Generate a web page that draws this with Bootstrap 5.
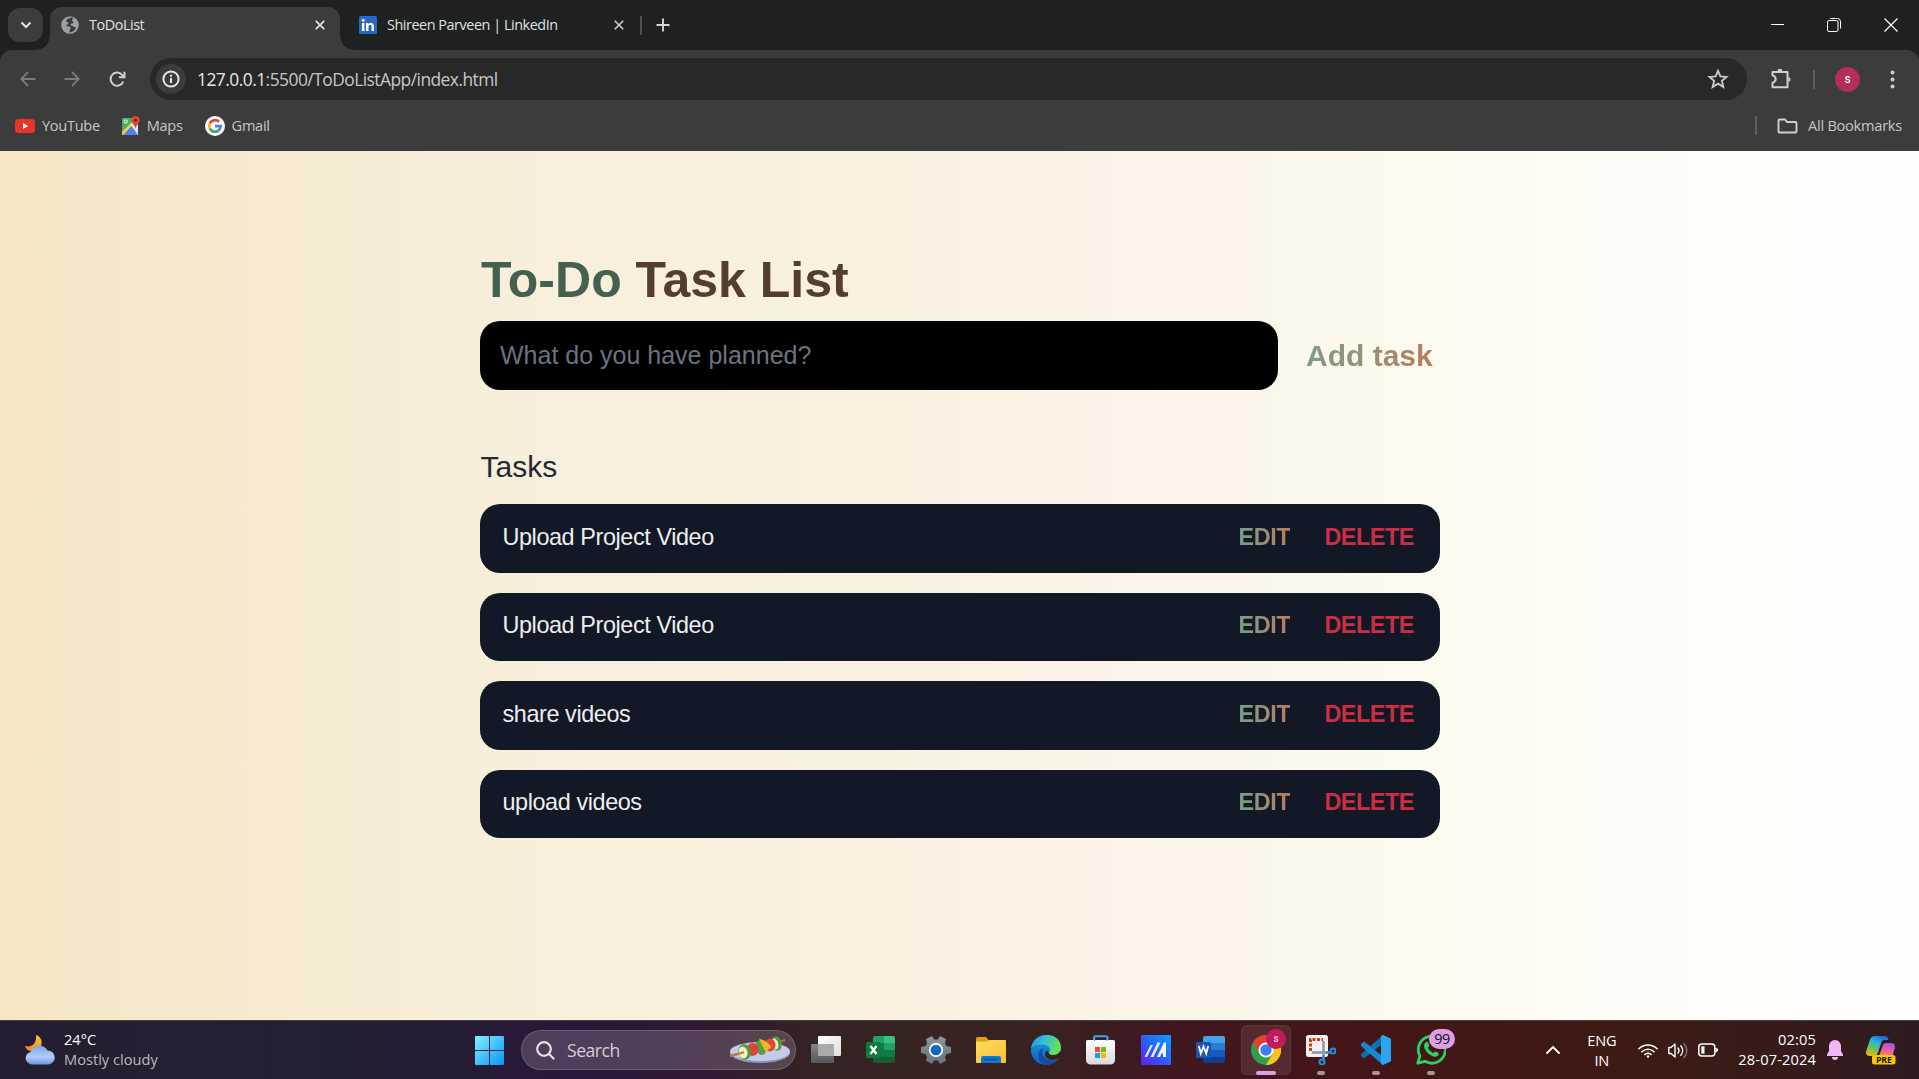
<!DOCTYPE html>
<html lang="en">
<head>
<meta charset="utf-8">
<title>ToDoList</title>
<link rel="stylesheet" href="https://cdn.jsdelivr.net/npm/bootstrap@5.3.0/dist/css/bootstrap.min.css">
<style>
  html, body { height: 100%; }
  body { font-family: "Liberation Sans", Arial, sans-serif; overflow: hidden; }
  svg { display: block; flex: none; }
  .desktop { width: 1919px; height: 1079px; }
  .ui { font-family: "Open Sans", "Noto Sans", sans-serif; }

  /* browser window */
  .tabstrip { height: 50px; background: #1f2020; }
  .tab-menu { width: 35px; height: 34px; margin: 8px 0 0 8px; border-radius: 12px; background: #3c3c3c; }
  .tab-active { width: 290px; height: 43px; margin: 7px 0 0 7px; padding: 0 11px 8px; border-radius: 12px 12px 0 0; background: #3c3c3c; }
  .tab-active::before, .tab-active::after { content: ""; position: absolute; bottom: 0; width: 14px; height: 14px; }
  .tab-active::before { left: -14px; background: radial-gradient(circle at 0 0, transparent 13.5px, #3c3c3c 14px); }
  .tab-active::after { right: -14px; background: radial-gradient(circle at 100% 0, transparent 13.5px, #3c3c3c 14px); }
  .tab-idle { height: 50px; padding-left: 19px; width: 302px; }
  .tab-text { font-size: 14.4px; letter-spacing: -.45px; color: #dfe1e3; line-height: 20px; margin-left: 10px; }
  .toolbar-back { background: #1f2020; }
  .toolbar { height: 54px; background: #3c3c3c; border-radius: 12px 12px 0 0; padding: 4px 0 0 20px; }
  .omnibox { width: 1597px; height: 42px; margin-left: 24px; border-radius: 21px; background: #282828; padding: 0 18px 0 6px; }
  .site-info { width: 30px; height: 30px; border-radius: 50%; background: #3c3c3c; }
  .url { font-size: 17.4px; letter-spacing: -.53px; color: #c7c7c7; margin-left: 11px; }
  .url b { font-weight: 400; color: #e8e8e8; }
  .avatar-dot { width: 25px; height: 25px; border-radius: 50%; background: #b32d5d; color: #fff; font: 12px "Roboto", sans-serif; }
  .bookmarks { height: 47px; background: #3c3c3c; padding: 0 0 4px 15px; }
  .bookmarks span { font-size: 14.6px; letter-spacing: -.32px; color: #c7c7c7; margin-left: 7px; }
  .bar-line { width: 2px; height: 19px; background: #5e5e5e; }

  /* to-do page */
  .todo-page { height: 869px; background: linear-gradient(to right, #f5e7c5 0%, #f6ebd0 13%, #f7eeda 25%, #faf2e2 50%, #fcf4e8 58%, #fcf9ed 72%, #fefdf9 88%, #ffffff 100%); padding-top: 98px; }
  .todo-wrap { width: 960px; margin-left: 480px; }
  .todo-title { font-size: 50px; line-height: 62px; margin: 0; height: 72px; padding-left: 1px; font-weight: 700; color: #553c30; }
  .todo-title span { color: #44614f; }
  .todo-input { width: 798px; height: 69px; border-radius: 20px; background: #000; border: 0; padding: 0 20px; font-size: 25px; color: #f3f4f6; }
  .todo-input::placeholder { color: #6b7280; opacity: 1; }
  .grad-text { border: 0; background: linear-gradient(to right, #799f8a, #bb7c5c); -webkit-background-clip: text; background-clip: text; color: transparent; font-weight: 700; padding: 0; }
  .add-btn { font-size: 30px; margin-left: 28px; }
  .tasks-head { font-size: 30px; line-height: 36px; font-weight: 400; color: #1f2937; margin: 59px 0 0; height: 55.2px; padding-left: .5px; }
  .task-row { height: 68.5px; border-radius: 20px; background: #121826; padding: 0 26px 2px 22.5px; margin-bottom: 20px; }
  .task-row .task-name { font-size: 23.4px; letter-spacing: -.4px; color: #eeeeee; }
  .edit-btn { font-size: 23.4px; letter-spacing: -.35px; }
  .delete-btn { font-size: 23.4px; letter-spacing: -.45px; font-weight: 700; color: #c92f42; margin-left: 34px; border: 0; background: none; padding: 0; }

  /* taskbar */
  .taskbar { height: 59px; color: #fff; border-top: 1px solid #45403f; background: linear-gradient(to right, #251e30 0%, #242032 14%, #251c34 24%, #29183a 30%, #311a33 37%, #352323 43%, #362321 53%, #411720 61%, #451518 70%, #421814 78%, #3c1b14 86%, #351b1a 94%, #2d1b20 100%); }
  .weather { width: 475px; padding-left: 25px; font-size: 14.6px; line-height: 20px; letter-spacing: .02px; }
  .weather div div + div { color: #bcb8be; }
  .search-box { width: 275px; height: 40px; margin-left: 17px; border-radius: 20px; background: rgba(255,255,255,.17); border: 1px solid rgba(255,255,255,.16); padding: 0 4px 0 14px; font-size: 17.6px; letter-spacing: -.5px; color: #d6cdd6; }
  .app-strip { margin-left: 2px; }
  .app { width: 55px; height: 58px; }
  .app::after { content: ""; position: absolute; bottom: 4px; left: 24px; width: 0; height: 4px; border-radius: 2px; background: #ab9495; }
  .app.running::after { width: 8px; }
  .app.current::after { width: 20px; left: 18px; background: #dfa1e5; }
  .app.current::before { content: ""; position: absolute; left: 3px; top: 4px; width: 50px; height: 50px; border-radius: 6px; background: rgba(255,255,255,.09); border: 1px solid rgba(255,255,255,.06); }
  .app svg { position: relative; }
  .chip { position: absolute; color: #111; background: #dc9fe6; border-radius: 10px; width: 26px; height: 20px; left: 26px; top: 8px; font-size: 14.4px; line-height: 20px; text-align: center; letter-spacing: -.4px; }
  .chip-user { position: absolute; background: #c01a5c; border-radius: 50%; width: 20px; height: 20px; left: 28px; top: 8px; font: bold 10px/20px "Roboto", sans-serif; text-align: center; color: #ecb6cd; }
  .tray { font-size: 14.6px; line-height: 20px; letter-spacing: -.2px; }
  .clock { letter-spacing: .15px; }
  .lift { padding-bottom: 2px; }
</style>
</head>
<body>
<div class="desktop d-flex flex-column">
  <header class="ui">
    <div class="tabstrip d-flex">
      <div class="tab-menu d-flex align-items-center justify-content-center">
        <svg width="12" height="8" viewBox="0 0 12 8" fill="none" stroke="#e3e3e3" stroke-width="2"><path d="M1.500 1.500 6 6l4.500-4.500"/></svg>
      </div>
      <div class="tab-active position-relative d-flex align-items-center">
        <svg width="18" height="18" viewBox="0 0 18 18"><circle cx="9" cy="9" r="8.800" fill="#9aa0a6"/><path d="M10.500 1.500C8 2.500 5 3.200 5.200 5c.2 1.500 2.300.8 2.300 2.200 0 1.300-2.500 1.300-2.300 2.500.3 1.200 2.300.6 3.500 1 1.500.6 1 1.800.3 2.600-.6.800-.5 1.800-.5 3.200 3.500-.4 6-2.500 6.500-5-2-.2-2.300-1.200-3.700-1.500-1.500-.3-2-1-1.300-2 .8-1 2-.2 2.500-1.300.4-1-1.500-1.200-1.500-2.500 0-1 .8-1.700 1.500-2.200z" fill="#3c3c3c"/></svg>
        <span class="tab-text" >ToDoList</span>
        <svg class="ms-auto me-1" width="10" height="10" viewBox="0 0 10 10" stroke="#e3e3e3" stroke-width="1.700"><path d="m.8.800 8.400 8.400M9.200.8.800 9.200"/></svg>
      </div>
      <div class="tab-idle d-flex align-items-center">
        <svg width="18" height="18" viewBox="0 0 18 18"><rect width="18" height="18" rx="1.500" fill="#2867c2"/><path d="M3 7h2.400v8H3zM7 7h2.300v1.100C10.600 6.200 15 6.300 15 10v5h-2.400v-4.500c0-2.200-3.100-2-3.100 0V15H7z" fill="#fff"/><circle cx="4.200" cy="4.200" r="1.500" fill="#fff"/></svg>
        <span class="tab-text">Shireen Parveen | LinkedIn</span>
        <svg class="ms-auto" width="10" height="10" viewBox="0 0 10 10" stroke="#d0d0d0" stroke-width="1.600"><path d="m.8.800 8.400 8.400M9.200.8.800 9.200"/></svg>
        <div class="bar-line ms-3 opacity-75"></div>
      </div>
      <div class="d-flex align-items-center" style="padding-left:14px">
        <svg width="14" height="14" viewBox="0 0 14 14" stroke="#d5d5d5" stroke-width="1.900"><path d="M7 .5v13M.5 7h13"/></svg>
      </div>
      <div class="ms-auto d-flex align-items-center" style="padding-right:21px;gap:43px">
        <svg width="14" height="14" viewBox="0 0 14 14" stroke="#fff"><path d="M1 6.500h13"/></svg>
        <svg width="14" height="14" viewBox="0 0 14 14" fill="none" stroke="#fff"><path d="M3 .5h7.500a3 3 0 0 1 3 3V10.500"/><rect x=".5" y="2.500" width="10.500" height="11" rx="1.500"/></svg>
        <svg width="14" height="14" viewBox="0 0 14 14" stroke="#fff" stroke-width="1.200"><path d="m.5.500 13 13M13.500.5.500 13.500"/></svg>
      </div>
    </div>
    <div class="toolbar-back">
      <div class="toolbar d-flex align-items-center">
        <svg width="16" height="16" viewBox="0 0 16 16" fill="none" stroke="#7b7b7b" stroke-width="1.800"><path d="M15.500 8H1.500M8 1 1.200 8 8 15"/></svg>
        <svg style="margin-left:28px" width="16" height="16" viewBox="0 0 16 16" fill="none" stroke="#7b7b7b" stroke-width="1.800"><path d="M.5 8h14M8 1l6.800 7L8 15"/></svg>
        <svg style="margin-left:29px" width="17" height="17" viewBox="0 0 17 17" fill="none" stroke="#d0d0d0" stroke-width="2"><path d="M14.300 10.500A6.600 6.600 0 1 1 13.500 4.300L15 6M15.500.8v5.400H10"/></svg>
        <div class="omnibox d-flex align-items-center">
          <div class="site-info d-flex align-items-center justify-content-center">
            <svg width="18" height="18" viewBox="0 0 18 18" fill="none" stroke="#e8e8e8" stroke-width="2"><circle cx="9" cy="9" r="7.600"/><path d="M9 8v5M9 4.800v2"/></svg>
          </div>
          <span class="url"><b>127.0.0.1</b>:5500/ToDoListApp/index.html</span>
          <svg class="ms-auto" width="22" height="22" viewBox="0 0 22 22" fill="none" stroke="#c9c9c9" stroke-width="1.900"><path d="m11 2.800 2.400 5.600 6.100.5-4.600 4 1.400 6-5.300-3.200-5.300 3.200 1.400-6-4.600-4 6.100-.5z"/></svg>
        </div>
        <svg style="margin-left:23px" width="22" height="22" viewBox="0 0 22 22" fill="none" stroke="#d0d0d0" stroke-width="2"><path d="M2.500 4h15v15.200h-15v-4.400c4.300-1.400 4.300-6 0-7.400z" stroke-linejoin="round"/><path d="M7.500 3.200a2.400 2.400 0 0 1 4.800 0zM18.300 9.200a2.300 2.300 0 0 1 0 4.600z" fill="#d0d0d0" stroke="none"/></svg>
        <div class="bar-line" style="margin-left:21px"></div>
        <div class="avatar-dot d-flex align-items-center justify-content-center" style="margin-left:20px">s</div>
        <svg style="margin-left:30px" width="5" height="19" viewBox="0 0 5 19" fill="#cfcfcf"><circle cx="2.500" cy="2.500" r="2"/><circle cx="2.500" cy="9.500" r="2"/><circle cx="2.500" cy="16.500" r="2"/></svg>
      </div>
    </div>
    <div class="bookmarks d-flex align-items-center">
      <svg width="20" height="14" viewBox="0 0 20 14"><rect width="20" height="14" rx="3.500" fill="#e8352a"/><path d="m8 4 5.200 3L8 10z" fill="#fff"/></svg>
      <span>YouTube</span>
      <svg style="margin-left:22px" width="18" height="20" viewBox="0 0 18 20"><path d="M0 3a1 1 0 0 1 1-1h15v17H1a1 1 0 0 1-1-1z" fill="#4caf62"/><path d="m1 19 8-9 8 9z" fill="#4a83ec"/><path d="m0 16 10-10 1.500 2L1 19H0z" fill="#f5cf4b"/><path d="M8.500 8.500 16 2v17z" fill="#e4e6e4"/><path d="M13.500 0A4.200 4.200 0 0 0 9.300 4.300c0 3 3.500 4 4.200 8.700.7-4.700 4.300-5.700 4.300-8.700A4.200 4.200 0 0 0 13.500 0z" fill="#d9483b"/><circle cx="13.500" cy="4.300" r="1.500" fill="#7c1c16"/><circle cx="3.800" cy="5.500" r="1.600" fill="none" stroke="#fff"/></svg>
      <span>Maps</span>
      <svg style="margin-left:22px" width="20" height="20" viewBox="0 0 20 20"><circle cx="10" cy="10" r="10" fill="#fff"/><g fill="none" stroke-width="2.700"><path d="M14 5.800A5.800 5.800 0 0 0 4.800 7.500" stroke="#e2453a"/><path d="M4.800 7.400a5.800 5.800 0 0 0 0 5.200" stroke="#f4b92a"/><path d="M4.800 12.500a5.800 5.800 0 0 0 8.900 1.900" stroke="#3aa757"/><path d="M13.600 14.400a5.800 5.800 0 0 0 2-4.200H10" stroke="#4a83ec"/></g></svg>
      <span>Gmail</span>
      <div class="bar-line ms-auto"></div>
      <svg style="margin-left:20px;margin-right:3px" width="21" height="16" viewBox="0 0 21 16" fill="none" stroke="#cfcfcf" stroke-width="1.900"><path d="M1.500 13V2.500a1 1 0 0 1 1-1H8l2 2.500h8.500a1 1 0 0 1 1 1v8.500a1 1 0 0 1-1 1h-16a1 1 0 0 1-1-1z"/></svg>
      <span style="margin-right:17px;letter-spacing:-.25px">All Bookmarks</span>
    </div>
  </header>

  <main class="todo-page">
    <div class="todo-wrap">
      <h1 class="todo-title"><span>To-Do</span> Task List</h1>
      <form class="d-flex align-items-center">
        <input class="todo-input" type="text" placeholder="What do you have planned?">
        <button class="grad-text add-btn" type="button">Add task</button>
      </form>
      <h2 class="tasks-head">Tasks</h2>
      <div class="task-row d-flex align-items-center"><span class="task-name me-auto">Upload Project Video</span><button class="grad-text edit-btn">EDIT</button><button class="delete-btn">DELETE</button></div>
      <div class="task-row d-flex align-items-center"><span class="task-name me-auto">Upload Project Video</span><button class="grad-text edit-btn">EDIT</button><button class="delete-btn">DELETE</button></div>
      <div class="task-row d-flex align-items-center"><span class="task-name me-auto">share videos</span><button class="grad-text edit-btn">EDIT</button><button class="delete-btn">DELETE</button></div>
      <div class="task-row d-flex align-items-center"><span class="task-name me-auto">upload videos</span><button class="grad-text edit-btn">EDIT</button><button class="delete-btn">DELETE</button></div>
    </div>
  </main>

  <footer class="taskbar ui d-flex align-items-center">
    <div class="weather d-flex align-items-center">
      <svg width="30" height="30" viewBox="0 0 30 30"><defs><linearGradient id="moon" x2="0" y2="1"><stop stop-color="#f9c74a"/><stop offset="1" stop-color="#ee8a1c"/></linearGradient><linearGradient id="cloud" x2="0" y2="1"><stop stop-color="#7fa7ea"/><stop offset=".6" stop-color="#b4cbf8"/><stop offset="1" stop-color="#6d95e4"/></linearGradient></defs><path d="M11 0c7 2 7.500 11 2 15C9 18 2 17 0 11c8 2 12-4 11-11z" fill="url(#moon)"/><path d="M7 29.500a7 6.500 0 0 1-1-12.800 9 9 0 0 1 16.500-1.200A7 7 0 0 1 23 29.500z" fill="url(#cloud)"/></svg>
      <div class="lift" style="margin-left:9px"><div>24°C</div><div>Mostly cloudy</div></div>
    </div>
    <svg width="29" height="29" viewBox="0 0 29 29"><defs><linearGradient id="win" x2="1" y2="1"><stop stop-color="#7df3ff"/><stop offset="1" stop-color="#0a92fb"/></linearGradient></defs><path d="M1 0h13v14H0V1a1 1 0 0 1 1-1zM15 0h13a1 1 0 0 1 1 1v13H15zM0 15h14v14H1a1 1 0 0 1-1-1zM15 15h14v13a1 1 0 0 1-1 1H15z" fill="url(#win)"/></svg>
    <div class="search-box d-flex align-items-center">
      <svg width="19" height="19" viewBox="0 0 19 19" fill="none" stroke="#e6e0e6" stroke-width="2.200" stroke-linecap="round"><circle cx="8" cy="8" r="6.800"/><path d="m13 13 4.500 4.500"/></svg>
      <span style="margin-left:12px">Search</span>
      <svg class="ms-auto" width="62" height="28" viewBox="0 0 62 28"><ellipse cx="31" cy="17" rx="30" ry="10" fill="#8b93c3"/><ellipse cx="31" cy="15.500" rx="30" ry="9.500" fill="#c3cbe8"/><path d="m1 20 55-16" stroke="#b4743c" stroke-width="2"/><ellipse cx="47.500" cy="7.500" rx="5" ry="7.300" fill="#4c9c3c" transform="rotate(-15 47.500 7.500)"/><ellipse cx="46" cy="8" rx="3.300" ry="5.500" fill="#e5efc2" transform="rotate(-15 46 8)"/><ellipse cx="41" cy="9" rx="5.500" ry="6.500" fill="#dd4a35"/><ellipse cx="32" cy="11.500" rx="5.500" ry="7.500" fill="#55a040" transform="rotate(-15 32 11.500)"/><path d="m30 2.500 6.500 2.500 6 5.500-6 5.500z" fill="#f4b62c"/><ellipse cx="23.500" cy="13.500" rx="6" ry="6.500" fill="#dc4434"/><ellipse cx="15.500" cy="16" rx="6.300" ry="7.800" fill="#4c9c3c" transform="rotate(-15 15.500 16)"/><ellipse cx="14" cy="16.500" rx="4.400" ry="6" fill="#f0f1cc" transform="rotate(-15 14 16.500)"/><path d="m1 20.200 14-4" stroke="#b97b40" stroke-width="2"/></svg>
    </div>
    <div class="app-strip d-flex">
      <div class="app position-relative d-flex align-items-center justify-content-center"><svg width="30" height="30" viewBox="0 0 30 30"><defs><linearGradient id="tv" x2="1" y2="1"><stop stop-color="#fff"/><stop offset="1" stop-color="#dedede"/></linearGradient><linearGradient id="tv2" x2="0" y2="1"><stop stop-color="#868686"/><stop offset="1" stop-color="#575757"/></linearGradient></defs><rect x="7" y="1" width="23" height="20" rx="1" fill="url(#tv)"/><rect y="9" width="23" height="19" rx="1" fill="url(#tv2)"/><path d="M7 9h16v12H7z" fill="#aaa"/></svg></div>
      <div class="app position-relative d-flex align-items-center justify-content-center"><svg width="30" height="30" viewBox="0 0 30 30"><path d="M7 3a2 2 0 0 1 2-2h10v7H7z" fill="#21a366"/><path d="M18 1h9a2 2 0 0 1 2 2v5H18z" fill="#33c481"/><path d="M7 8h11v7H7z" fill="#107c41"/><path d="M18 8h11v7H18z" fill="#21a366"/><path d="M7 15h22v7H7z" fill="#107c41"/><path d="M7 22h22v4a2 2 0 0 1-2 2H9a2 2 0 0 1-2-2z" fill="#185c37"/><rect y="7" width="15" height="16" rx="1.500" fill="#0f7a3f"/><path d="m4.500 11 6 8M10.500 11l-6 8" stroke="#fff" stroke-width="2.200"/></svg></div>
      <div class="app position-relative d-flex align-items-center justify-content-center"><svg width="30" height="30" viewBox="0 0 30 30"><defs><linearGradient id="gear" x2="0" y2="1"><stop stop-color="#8d949b"/><stop offset="1" stop-color="#66717b"/></linearGradient></defs><path d="m11 1 2.200 3.500h3.600L19 1l6 3-1 4.500 1.500 2.500 4.500 1v6l-4.500 1-1.500 2.500 1 4.500-6 3-2.200-3.500h-3.600L11 29l-6-3 1-4.500L4.500 19 0 18v-6l4.500-1L6 8.500 5 4z" fill="url(#gear)"/><circle cx="15" cy="15" r="7.200" fill="#eef3f8"/><circle cx="15" cy="15" r="5.300" fill="#1369b8"/></svg></div>
      <div class="app position-relative d-flex align-items-center justify-content-center"><svg width="30" height="30" viewBox="0 0 30 30"><defs><linearGradient id="fold" x2="1" y2="1"><stop stop-color="#ffdb65"/><stop offset="1" stop-color="#fbc02e"/></linearGradient></defs><path d="M0 3.500a1.500 1.500 0 0 1 1.500-1.500H10l3 3.500V12H0z" fill="#e0a106"/><path d="M0 6.500h11L13.500 5H29a1 1 0 0 1 1 1v21a1 1 0 0 1-1 1H1a1 1 0 0 1-1-1z" fill="url(#fold)"/><path d="M5 28v-5a2 2 0 0 1 2-2h16a2 2 0 0 1 2 2v5z" fill="#0f78d0"/><path d="M9 24.500h12" stroke="#07529a" stroke-width="1.500" stroke-linecap="round"/></svg></div>
      <div class="app position-relative d-flex align-items-center justify-content-center"><svg width="30" height="30" viewBox="0 0 30 30"><defs><linearGradient id="e1" x2="1" y2=".3"><stop stop-color="#1993dc"/><stop offset=".5" stop-color="#35c1d8"/><stop offset="1" stop-color="#66e24d"/></linearGradient><linearGradient id="e2" x2="0" y2="1"><stop stop-color="#1b9de2"/><stop offset="1" stop-color="#0b62c8"/></linearGradient></defs><circle cx="15" cy="15" r="15" fill="url(#e2)"/><path d="M12 13c-2 5 0 11 7 12.500 3 .6 6-.5 8.300-2A15 15 0 0 1 15 30C8 28 5 21 9 15z" fill="#134d9c"/><path d="M0 14C2-5 30-4 30 12.500c0 5-4 7.500-8 7.500-3 0-4.800-1-4-2.500 2-2 1-6.500-4-7.500C8 9 1.500 10 0 14z" fill="url(#e1)"/><path d="M18 17.500c-.8 1.500 1 2.500 4 2.500 3.500 0 6-1.500 7.300-4L32 22l-4.200 1c-3 2-9 3.500-13-1-1.300-2-1-4 .8-6.500z" fill="#3a211f"/></svg></div>
      <div class="app position-relative d-flex align-items-center justify-content-center"><svg width="30" height="30" viewBox="0 0 30 30"><defs><linearGradient id="st" x2="0" y2="1"><stop stop-color="#fff"/><stop offset="1" stop-color="#d9d9dc"/></linearGradient></defs><path d="M8 8V2.500A1.200 1.200 0 0 1 9.200 1.300h11A1.200 1.200 0 0 1 21.500 2.500V8" fill="none" stroke="#2fabec" stroke-width="2"/><path d="M1.500 5h26a1.500 1.500 0 0 1 1.500 1.500V25a4.500 4.500 0 0 1-4.500 4.500h-20A4.500 4.500 0 0 1 0 25V6.500A1.500 1.500 0 0 1 1.500 5z" fill="url(#st)"/><path d="M8 6V3h1.200v3zM20.500 6V3h1.200v3z" fill="#2fabec"/><path d="M9 12h5v5H9z" fill="#f04e25"/><path d="M15 12h5v5h-5z" fill="#7eba03"/><path d="M9 18h5v5H9z" fill="#09a3ee"/><path d="M15 18h5v5h-5z" fill="#fbb705"/></svg></div>
      <div class="app position-relative d-flex align-items-center justify-content-center"><svg width="30" height="30" viewBox="0 0 30 30"><defs><linearGradient id="as" x1="1" y1="0" x2="0" y2="1"><stop stop-color="#0aa0fb"/><stop offset=".5" stop-color="#2663fb"/><stop offset="1" stop-color="#651bf2"/></linearGradient></defs><path d="M0 0h30v30H0z" fill="url(#as)"/><path d="M3.500 22 9.500 10H12L6 22zM9.500 22 16.500 7.500h3L12.500 22z" fill="#dfe6ff"/><path d="M16 22 23 7.500h2V22h-3v-3.500h-1.500L19 22z" fill="#f2f5ff"/></svg></div>
      <div class="app position-relative d-flex align-items-center justify-content-center"><svg width="30" height="30" viewBox="0 0 30 30"><path d="M7 3a2 2 0 0 1 2-2h18a2 2 0 0 1 2 2v5H7z" fill="#41a5ee"/><path d="M7 8h22v7H7z" fill="#2b7cd3"/><path d="M7 15h22v7H7z" fill="#185abd"/><path d="M7 22h22v4a2 2 0 0 1-2 2H9a2 2 0 0 1-2-2z" fill="#103f91"/><rect y="7" width="15" height="16" rx="1.500" fill="#1855b5"/><path d="m2.800 11 2 7.500 2.700-7 2.700 7 2-7.500" fill="none" stroke="#fff" stroke-width="1.800"/></svg></div>
      <div class="app current position-relative d-flex align-items-center justify-content-center"><svg width="30" height="30" viewBox="0 0 30 30"><circle cx="15" cy="15" r="15" fill="#2da04e"/><path d="M2 7.500A15 15 0 0 1 28 7.500H15L8.500 18.800z" fill="#e53f33"/><path d="M28 7.500A15 15 0 0 1 15 30l6.500-11.200L15 7.500z" fill="#fcc31e"/><circle cx="15" cy="15" r="7.500" fill="#fff"/><circle cx="15" cy="15" r="5.700" fill="#3f7ef0"/></svg><span class="chip-user">s</span></div>
      <div class="app running position-relative d-flex align-items-center justify-content-center"><svg width="30" height="30" viewBox="0 0 30 30"><rect width="22" height="22" rx="2.500" fill="#eff1f3"/><path d="M4.500 16V4.500H17" fill="none" stroke="#d83b01" stroke-width="3" stroke-dasharray="3 1.500"/><path d="M17.500 6v18M6 17.500h18" stroke="#8d959c" stroke-width="2.400"/><circle cx="27" cy="16" r="2.500" fill="none" stroke="#1d8fe0" stroke-width="2"/><circle cx="16" cy="27" r="2.500" fill="none" stroke="#1d8fe0" stroke-width="2"/><path d="m20 18 5-1M17.500 20v5" stroke="#1d8fe0" stroke-width="2"/></svg></div>
      <div class="app running position-relative d-flex align-items-center justify-content-center"><svg width="30" height="30" viewBox="0 0 30 30"><path d="M22 0v8.500L3 23.500l-3-2.700v-1.600z" fill="#0b6fb8"/><path d="M22 30v-8.500L3 6.500 0 9v2z" fill="#1488d2"/><path d="m22 0 7 3.200a2 2 0 0 1 1 1.500v20.600a2 2 0 0 1-1 1.500L22 30c-1 0-2-1-2-1.500v-27C20 1 21 0 22 0z" fill="#2aa5f0"/></svg></div>
      <div class="app running position-relative d-flex align-items-center justify-content-center"><svg width="30" height="30" viewBox="0 0 30 30"><path d="M1.800 28.200 3.900 21A13.500 13.500 0 1 1 9 26.300z" fill="none" stroke="#27d366" stroke-width="2.800" stroke-linejoin="round"/><path d="M9.500 7.500c1-1 2.300-.8 2.800.5l1 2.500c.2.800-1.300 2-1.200 2.500.8 2 2.800 4 5 4.900.6.200 1.600-1.600 2.300-1.400l2.700 1.300c1 .5.700 2.500-.4 3.300C17 24.500 6.500 15 8.200 9.500z" fill="#27d366"/></svg><span class="chip">99</span></div>
    </div>
    <div class="tray d-flex align-items-center ms-auto">
      <svg width="14" height="8" viewBox="0 0 14 8" fill="none" stroke="#fff" stroke-width="1.800" stroke-linecap="round"><path d="m1 7 6-6 6 6"/></svg>
      <div class="text-center" style="margin-left:27px">ENG<br>IN</div>
      <svg style="margin-left:22px" width="20" height="15" viewBox="0 0 20 15" fill="none" stroke="#fff" stroke-width="1.600" stroke-linecap="round"><path d="M.9 5.700a12.900 12.900 0 0 1 18.200 0M4 8.800a8.500 8.500 0 0 1 12 0M6.900 11.500a4.600 4.600 0 0 1 6.200 0"/><circle cx="10" cy="13.500" r="1.200" fill="#fff" stroke="none"/></svg>
      <svg style="margin-left:10px" width="20" height="17" viewBox="0 0 20 17" fill="none" stroke="#fff" stroke-width="1.400" stroke-linecap="round" stroke-linejoin="round"><path d="M.8 5.500H3L7 2v13l-4-3.500H.8zM10 6c1.200 1.600 1.200 3.600 0 5M12.800 3.800c2.500 2.800 2.500 6.600 0 9.400"/><path d="M15.800 1.500c4 4 4 10 0 14" stroke="#8a7572"/></svg>
      <svg style="margin-left:10px" width="20" height="14" viewBox="0 0 20 14" fill="none" stroke="#fff" stroke-width="1.500"><rect x=".8" y="1" width="16" height="12" rx="3"/><path d="M3.300 3.300h3.200v7.400H3.300z" fill="#fff" stroke="none"/><path d="M17.500 4.500 20 6v2l-2.500 1.500z" fill="#fff" stroke="none"/></svg>
      <div class="text-end clock lift" style="margin-left:20px">02:05<br>28-07-2024</div>
      <svg style="margin-left:11px" width="16" height="20" viewBox="0 0 16 20" fill="#efb8f3"><path d="M8 0a6 6 0 0 1 6 6v5l2 3.500V16H0v-1.500L2 11V6a6 6 0 0 1 6-6zM5 17h6a3 3 0 0 1-6 0z"/></svg>
      <svg style="margin-left:23px;margin-right:23px" width="30" height="30" viewBox="0 0 30 30"><defs><linearGradient id="c1" x1=".7" x2=".2" y2="1"><stop stop-color="#1d6be0"/><stop offset=".35" stop-color="#26b4dc"/><stop offset=".7" stop-color="#7cc04c"/><stop offset="1" stop-color="#f2b51d"/></linearGradient><linearGradient id="c2" x1=".6" x2=".3" y2="1"><stop stop-color="#a450ea"/><stop offset=".5" stop-color="#ea5aa6"/><stop offset="1" stop-color="#f58a56"/></linearGradient></defs><path d="M9 1h10c2 0 3 1.500 3.500 4h-4c-2 0-3 1.500-3.500 3.500l-3 9C11 20 10 21 8 21H4c-4 0-4.500-3-3.500-6L4 4.500C5 2 6.500 1 9 1z" fill="url(#c1)"/><path d="M20 8h5c4 0 4.500 3 3.500 6l-2 7H13l4-11c.5-1.300 1.500-2 3-2z" fill="url(#c2)"/><rect x="6" y="20" width="23.500" height="9.500" rx="2.500" fill="#fbc500"/><text x="17.800" y="27.900" font-family="Open Sans" font-weight="700" font-size="8.800" text-anchor="middle" fill="#1b1600">PRE</text></svg>
    </div>
  </footer>
</div>
<script src="https://cdn.jsdelivr.net/npm/bootstrap@5.3.0/dist/js/bootstrap.bundle.min.js"></script>
</body>
</html>
